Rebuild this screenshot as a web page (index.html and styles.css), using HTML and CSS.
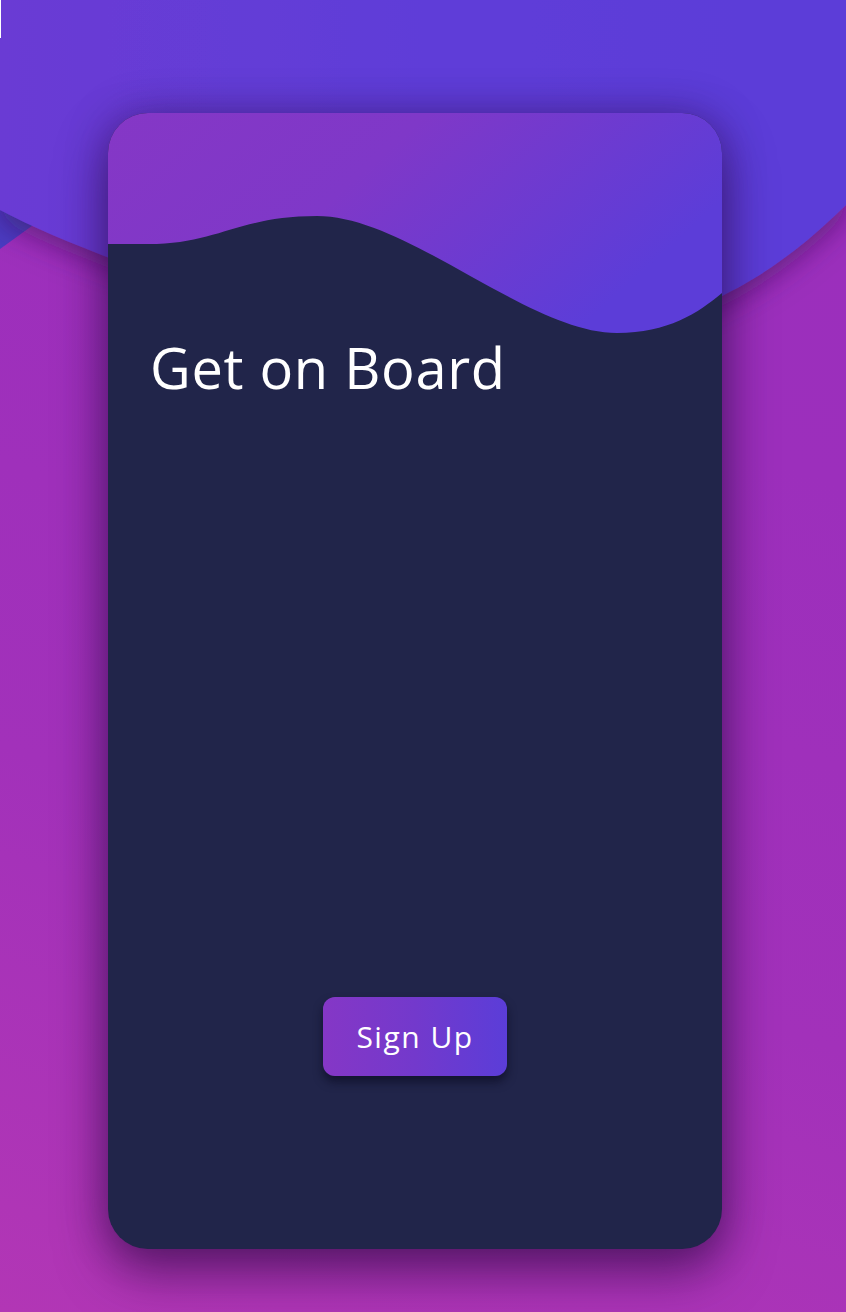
FILE: index.html
```html
<!DOCTYPE html>
<html lang="en">
<head>
<meta charset="utf-8">
<title>Get on Board</title>
<link rel="stylesheet" href="styles.css">
</head>
<body>
<svg class="bg-wave" width="846" height="420" viewBox="0 0 846 420" aria-hidden="true">
  <defs>
    <linearGradient id="bgw" x1="0" y1="0" x2="1" y2="0">
      <stop offset="0" stop-color="#6a3ad4"/>
      <stop offset="0.5" stop-color="#5f3ed8"/>
      <stop offset="1" stop-color="#5b3ed8"/>
    </linearGradient>
    <filter id="sh" x="-10%" y="-10%" width="120%" height="140%">
      <feDropShadow dx="0" dy="10" stdDeviation="14" flood-color="#3a0d55" flood-opacity="0.55"/>
    </filter>
  </defs>
  <path d="M0,205 L36,223 L0,249 Z" fill="#4a3cc2"/>
  <path filter="url(#sh)" fill="url(#bgw)" d="M0,0 H846 V205 C770,280 680,335 540,335 C380,335 220,300 120,262 C70,243 30,226 0,210 Z"/>
</svg>
<span class="edge-mark"></span>
<main class="card">
  <svg class="card-wave" width="614" height="222" viewBox="0 0 614 222" aria-hidden="true">
    <defs>
      <linearGradient id="cw" x1="0" y1="0" x2="1" y2="0.4">
        <stop offset="0" stop-color="#8537c6"/>
        <stop offset="0.45" stop-color="#7f38c8"/>
        <stop offset="1" stop-color="#5c3dd8"/>
      </linearGradient>
    </defs>
    <path fill="url(#cw)" d="M0,0 H614 V180 C590,200 560,220 509,220 C420,220 300,103 209,103 C130,103 110,131 40,131 L0,131 Z"/>
  </svg>
  <h1 class="title">Get on Board</h1>
  <div class="actions">
    <button class="btn" type="button">Sign Up</button>
  </div>
</main>
</body>
</html>
```
FILE: styles.css
```css
html, body {
  margin: 0;
  padding: 0;
}
body {
  width: 846px;
  height: 1312px;
  overflow: hidden;
  position: relative;
  background: linear-gradient(20deg, #b236b5 0%, #a231ba 35%, #9c2fbc 70%, #9a2fbc 100%);
  font-family: "Open Sans", "DejaVu Sans", sans-serif;
  padding-top: 113px;
  box-sizing: border-box;
}
.bg-wave {
  position: absolute;
  left: 0;
  top: 0;
  z-index: 0;
}
.edge-mark {
  position: absolute;
  left: 0;
  top: 0;
  width: 1px;
  height: 38px;
  background: #ffffff;
  z-index: 1;
}
.card {
  position: relative;
  z-index: 2;
  margin-left: 108px;
  width: 614px;
  height: 1136px;
  border-radius: 40px;
  background: #21254a;
  overflow: hidden;
  box-shadow: 0 24px 50px rgba(40, 8, 60, 0.55), 0 0 40px rgba(40, 10, 70, 0.35);
  display: flex;
  flex-direction: column;
}
.card-wave {
  display: block;
  flex: none;
}
.title {
  margin: 0;
  padding: 0 0 0 42px;
  margin-top: -1px;
  color: #ffffff;
  font-family: "Open Sans", sans-serif;
  font-weight: 400;
  font-size: 56px;
  line-height: 66px;
  letter-spacing: 0.7px;
}
.actions {
  display: flex;
  justify-content: center;
  margin-top: 597px;
}
.btn {
  width: 184px;
  height: 79px;
  border: none;
  border-radius: 12px;
  background: linear-gradient(90deg, #8537c6 0%, #7339cc 50%, #5b3dd8 100%);
  color: #ffffff;
  font-family: "Open Sans", sans-serif;
  font-size: 30px;
  font-weight: 400;
  letter-spacing: 1.5px;
  box-shadow: 0 6px 10px rgba(8, 8, 30, 0.6);
  padding: 0;
  cursor: pointer;
}
```
